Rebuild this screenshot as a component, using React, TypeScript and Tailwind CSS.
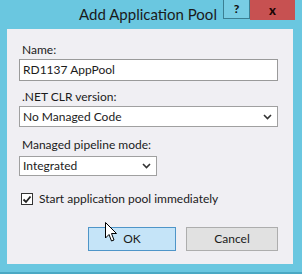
import React from 'react';

function Chevron() {
    return (
        <svg width="9" height="6" viewBox="0 0 9 6" className="shrink-0">
            <path d="M1 1 L4.5 4.5 L8 1" fill="none" stroke="#333" strokeWidth="1.6" />
        </svg>
    );
}

function Select({ value, className }: { value: string; className: string }) {
    return (
        <div className={`flex items-center justify-between bg-white border border-[#a0a0a0] pl-[3px] pr-[5px] ${className}`}>
            <span>{value}</span>
            <Chevron />
        </div>
    );
}

export default function App() {
    return (
        <main
            className="w-[302px] h-[274px] bg-[#6ac7e0] flex flex-col text-[#1b1b1b] text-[12px] leading-[16px] border-b-2 border-[#4aa9c4]"
            style={{ fontFamily: 'Lato, "Open Sans", sans-serif' }}
        >
            {/* Title bar */}
            <div className="relative h-[29px] shrink-0">
                <div className="pt-[5px] pr-[6px] text-center text-[15px] leading-[18px] text-[#1a1a1a]">Add Application Pool</div>
                <div className="absolute top-0 right-[7px] flex">
                    <div className="w-[27px] h-[19px] bg-[#78cde4] border border-[#3b7f93] border-t-0 flex items-center justify-center text-[12px] font-black leading-none text-[#111]">?</div>
                    <div className="w-[45px] h-[20px] bg-[#c75151] flex items-center justify-center text-[13px] font-black leading-none text-[#1a0505]">x</div>
                </div>
            </div>

            {/* Body */}
            <div className="ml-[7px] mr-[9px] h-[235px] bg-[#f0eff3] pl-[12px] pr-[15px] pt-[13px] flex flex-col relative">
                <label className="pl-[3px]">Name:</label>
                <div className="mt-[1px] h-[22px] bg-white border border-[#9a9a9a] pl-[3px] flex items-center">RD1137 AppPool</div>

                <label className="pl-[3px] mt-[8px]">.NET CLR version:</label>
                <Select value="No Managed Code" className="mt-[1px] h-[21px]" />

                <label className="pl-[3px] mt-[10px]">Managed pipeline mode:</label>
                <Select value="Integrated" className="mt-[3px] h-[20px] w-[138px]" />

                <div className="mt-[15px] flex items-center gap-[6px] pl-[2px]">
                    <div className="w-[12px] h-[12px] border border-[#333] bg-white flex items-center justify-center">
                        <svg width="10" height="9" viewBox="0 0 10 9">
                            <path d="M1.5 4.5 L4 7 L8.5 1.5" fill="none" stroke="#222" strokeWidth="1.8" />
                        </svg>
                    </div>
                    <span>Start application pool immediately</span>
                </div>

                <div className="mt-[20px] flex justify-end gap-[10px]">
                    <button className="w-[88px] h-[24px] bg-[#c5e4f8] border border-[#4f95c8] text-[12px]">OK</button>
                    <button className="w-[92px] h-[24px] bg-[#e1e1e1] border border-[#adadad] text-[12px]">Cancel</button>
                </div>

                {/* mouse pointer */}
                <svg className="absolute left-[98px] top-[193px]" width="13" height="21" viewBox="0 0 13 21">
                    <path d="M0.5 0.5 L0.5 16 L4 12.5 L6.5 19 L9 18 L6.5 11.5 L11.5 11.5 Z" fill="#fff" stroke="#000" strokeWidth="1" strokeLinejoin="round" />
                </svg>
            </div>
        </main>
    );
}
